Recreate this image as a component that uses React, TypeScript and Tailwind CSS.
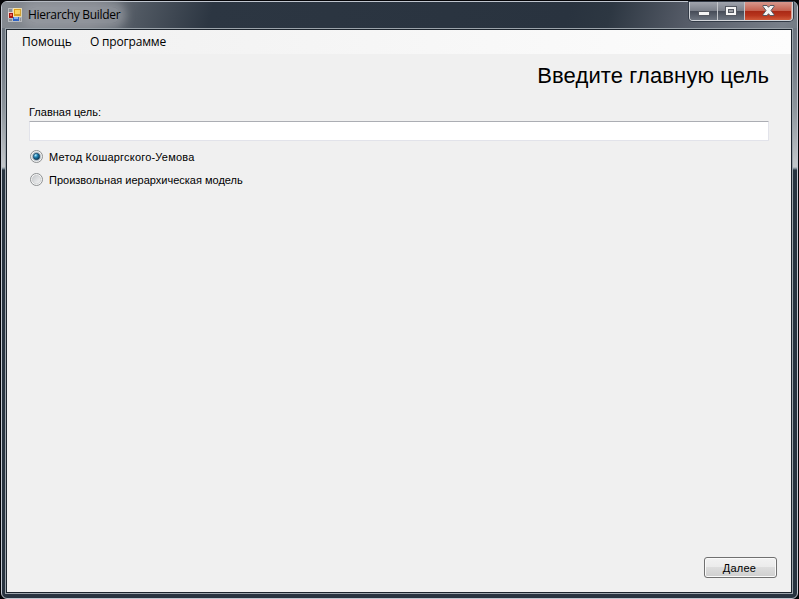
import React from "react";

const ui = "font-['Open_Sans','Noto_Sans',sans-serif]";
const form = "font-['Liberation_Sans',Arial,sans-serif]";

function AppIcon() {
  return (
    <svg width="14" height="14" viewBox="0 0 14 14" shapeRendering="crispEdges" className="shrink-0">
      <rect width="14" height="14" fill="#b9bcc0" />
      <path d="M1 1h3v3H1zM1 11h3v2H1zM12 10h1v3h-1z" fill="#898d92" />
      <path d="M0 4h5v6H0z" fill="#e9d0cc" />
      <path d="M1 5h4v5H1z" fill="#a81810" />
      <path d="M2 6h2v2H2z" fill="#ef6a55" />
      <path d="M5 0h9v9H5z" fill="#f4e3b0" />
      <path d="M6 1h7v7H6z" fill="#dba018" />
      <path d="M7 2h5v4H7z" fill="#ffd75a" />
      <path d="M5 9h6v4H5z" fill="#2d62c4" />
      <path d="M6 9h4v2H6z" fill="#83b3f5" />
    </svg>
  );
}

function CaptionButtons() {
  const gray = "bg-[linear-gradient(180deg,#a0a4ad_0,#7b808a_48%,#454b57_50%,#6d747f_100%)]";
  return (
    <div className="flex h-[19px] w-[104px] rounded-b-[4px] border border-[#d2d5da] border-t-0 shadow-[0_0_0_1px_#333b47]">
      <div className={`flex w-[28px] items-center justify-center rounded-bl-[3px] border-r border-[#c2c5ca] ${gray}`}>
        <svg width="12" height="6" shapeRendering="crispEdges" className="mt-[5px]">
          <rect x="0" y="0" width="12" height="5" fill="#555962" />
          <rect x="1" y="1" width="10" height="3" fill="#f5f5f5" />
        </svg>
      </div>
      <div className={`flex w-[27px] items-center justify-center border-r border-[#c2c5ca] ${gray}`}>
        <svg width="12" height="10" shapeRendering="crispEdges" className="mb-px">
          <rect width="12" height="10" fill="#555962" />
          <rect x="1" y="1" width="10" height="8" fill="#f5f5f5" />
          <rect x="3" y="3" width="6" height="4" fill="#555962" />
          <rect x="4" y="4" width="4" height="2" fill="#9a9da3" />
        </svg>
      </div>
      <div className="flex flex-1 items-center justify-center rounded-br-[3px] border-r border-[#dc9c90] bg-[linear-gradient(180deg,#d7988d_0,#c4614f_48%,#a92815_50%,#b8351d_75%,#cf5a3a_100%)]">
        <svg width="13" height="11" viewBox="0 0 13 11" className="mb-px">
          <path d="M1 .5h4L6.5 2.3 8 .5h4v1L9 5.5l3 4v1H8L6.5 8.7 5 10.5H1v-1l3-4-3-4z" fill="#f5f5f5" stroke="#555962" />
        </svg>
      </div>
    </div>
  );
}

function Radio({ checked, label, spacing }: { checked?: boolean; label: string; spacing: string }) {
  return (
    <label className="flex h-[23px] items-center">
      <svg width="13" height="13" viewBox="0 0 13 13" className="mr-[6px] shrink-0">
        <defs>
          <linearGradient id="well" x1="0" y1="0" x2="1" y2="1">
            <stop offset="0" stopColor="#c4c7ca" />
            <stop offset="1" stopColor="#f5f5f5" />
          </linearGradient>
          <radialGradient id="dot" cx=".35" cy=".3" r=".75">
            <stop offset="0" stopColor="#bdefff" />
            <stop offset=".4" stopColor="#2388b9" />
            <stop offset="1" stopColor="#08324f" />
          </radialGradient>
        </defs>
        <circle cx="6.5" cy="6.5" r="6" fill="#f7f7f7" stroke="#8c8f91" />
        <circle cx="6.5" cy="6.5" r="4.3" fill="url(#well)" stroke={checked ? "#a6b2ba" : "#c6c8ca"} strokeWidth=".7" />
        {checked && <circle cx="6.5" cy="6.5" r="3.2" fill="url(#dot)" stroke="#123a57" strokeWidth=".7" />}
      </svg>
      <span className={`whitespace-nowrap pt-px text-[11px] leading-[13px] ${spacing}`}>{label}</span>
    </label>
  );
}

export default function App() {
  return (
    <div className="h-[599px] w-[799px] overflow-hidden bg-[#050508] px-px pt-px text-black">
      <div className="flex h-[598px] w-[797px] flex-col rounded-[6px] border border-[#bfc5ce] bg-[linear-gradient(180deg,#68707a_0,#747c86_60px,#8c949b_105px,#c3c7ca_165px,#687883_167px,#283440_168px,#28333f_100%)] pb-[4px] pl-[3px] pr-[4px]">
        <header className="-ml-[3px] -mr-[4px] flex h-[26px] shrink-0 justify-between rounded-t-[5px] bg-[linear-gradient(105deg,#858a91_0,#777c84_90px,#505862_135px,#2c3642_205px,#29333f_550px,#2d3742_590px,#555b67_665px,#79808a_760px,#747c85_100%)]">
          <div className="flex h-[26px] items-center pl-[6px]">
            <AppIcon />
            <span className={`${ui} ml-[6px] whitespace-nowrap rounded-full bg-[#a0a4aa]/60 text-[12px] leading-[16px] tracking-[-0.3px] shadow-[0_0_8px_6px_rgba(160,164,170,0.6)]`}>
              Hierarchy Builder
            </span>
          </div>
          <div className="pr-[4px]">
            <CaptionButtons />
          </div>
        </header>

        <main className="flex min-h-0 flex-1 flex-col border border-[#9ba3aa] bg-[#1b232c] p-px">
          <div className="flex min-h-0 flex-1 flex-col bg-[#f0f0f0]">
            <nav className={`${ui} flex h-[24px] shrink-0 items-center bg-linear-to-r from-[#f0f0f0] to-[#fdfdfd] pl-[15px] text-[12px] leading-[16px]`}>
              <span className="w-[68px] whitespace-nowrap">Помощь</span>
              <span className="whitespace-nowrap tracking-[-0.18px]">О программе</span>
            </nav>

            <section className={`${form} flex min-h-0 flex-1 flex-col px-[22px]`}>
              <h1 className="mt-[8px] h-[28px] whitespace-nowrap text-right text-[22px] leading-[28px] tracking-[0.12px]">
                Введите главную цель
              </h1>
              <div className="mt-[16px] h-[13px] whitespace-nowrap text-[11px] leading-[13px]">Главная цель:</div>
              <input
                aria-label="Главная цель"
                className="mt-[2px] h-[20px] w-[740px] shrink-0 rounded-[1px] border border-[#e2e3ea] border-t-[#abadb3] bg-white px-1 text-[11px] outline-none"
              />
              <div className="mt-[4px] pl-px">
                <Radio checked label="Метод Кошаргского-Уемова" spacing="tracking-[0.2px]" />
                <Radio label="Произвольная иерархическая модель" spacing="tracking-[0px]" />
              </div>
              <button className="mt-auto -mr-[8px] mb-[14px] h-[21px] w-[73px] shrink-0 self-end rounded-[3px] border border-[#707070] bg-[linear-gradient(180deg,#f2f2f2_0,#ebebeb_48%,#dddddd_50%,#cfcfcf_100%)] pr-[2px] pt-px text-[11px] leading-[13px] tracking-[0.25px] shadow-[inset_0_0_0_1px_#fafafa]">
                Далее
              </button>
            </section>
          </div>
        </main>
      </div>
    </div>
  );
}
